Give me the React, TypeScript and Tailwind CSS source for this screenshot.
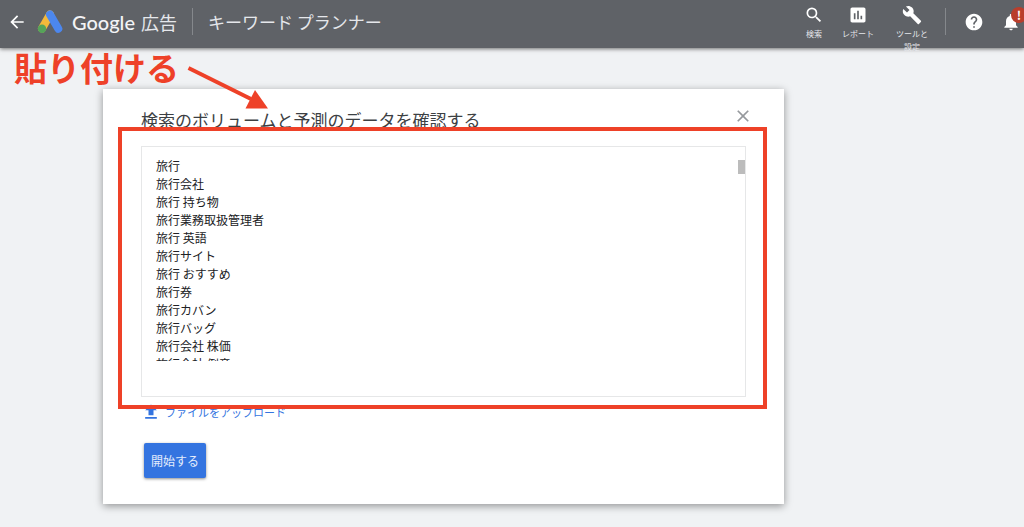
import { ReactNode } from 'react';
import { MdArrowBack, MdAssessment, MdBuild, MdClose, MdFileUpload, MdHelp, MdNotifications, MdSearch } from 'react-icons/md';

const keywords = [
    '旅行',
    '旅行会社',
    '旅行 持ち物',
    '旅行業務取扱管理者',
    '旅行 英語',
    '旅行サイト',
    '旅行 おすすめ',
    '旅行券',
    '旅行カバン',
    '旅行バッグ',
    '旅行会社 株価',
    '旅行会社 倒産',
];

interface ToolButtonProps {
    icon: ReactNode;
    label: ReactNode;
    className: string;
}

function ToolButton({ icon, label, className }: ToolButtonProps) {
    return (
        <button type="button" className={`flex flex-col items-center ${className}`}>
            {icon}
            <span className="mt-[2px] text-[8px] leading-[13px] text-gray-200">{label}</span>
        </button>
    );
}

function AdsLogo() {
    return (
        <svg width="26" height="24" viewBox="0 0 26 24" className="ml-[10px] shrink-0" aria-hidden="true">
            <path d="M13 4.5 5 18.5" stroke="#f3b93b" strokeWidth="8" strokeLinecap="round" />
            <path d="M13 4.5l8.3 14.2" stroke="#4c87ee" strokeWidth="8" strokeLinecap="round" />
            <circle cx="5" cy="18.7" r="4.2" fill="#54a45a" />
        </svg>
    );
}

function Header() {
    return (
        <header className="relative flex h-12 items-start bg-[#5f6267] text-white shadow-[0_1px_4px_rgba(0,0,0,0.55)]">
            <div className="flex h-[43px] items-center pl-[7px]">
                <button type="button" aria-label="戻る">
                    <MdArrowBack size={20} />
                </button>
                <AdsLogo />
                <span className="ml-[9px] flex items-center whitespace-nowrap">
                    <span className="font-['Lato','Noto_Sans_CJK_JP',sans-serif] text-[20px] leading-6 font-medium text-gray-100">Google</span>
                    <span className="ml-[6px] text-[18px] leading-6 text-gray-200">広告</span>
                </span>
                <span className="mx-[15px] h-[27px] w-px bg-[#85888c]" />
                <h1 className="text-[17px] leading-6 whitespace-nowrap text-gray-200">キーワード プランナー</h1>
            </div>
            <div className="ml-auto flex shrink-0 items-start pr-[3px]">
                <ToolButton className="mt-[5px] w-9" icon={<MdSearch size={20} />} label="検索" />
                <ToolButton className="mt-[5px] w-[52px]" icon={<MdAssessment size={20} />} label="レポート" />
                <ToolButton
                    className="mt-[5px] w-14"
                    icon={<MdBuild size={20} />}
                    label={
                        <>
                            ツールと
                            <br />
                            設定
                        </>
                    }
                />
                <div className="flex h-[43px] items-center">
                    <span className="mr-[18px] ml-[5px] h-[27px] w-px bg-[#85888c]" />
                    <button type="button" aria-label="ヘルプ">
                        <MdHelp size={20} />
                    </button>
                    <button type="button" aria-label="通知" className="relative ml-[17px]">
                        <MdNotifications size={20} />
                        <span className="absolute -top-[5px] left-[10px] flex size-4 items-center justify-center rounded-full bg-[#b93e2c] text-[12px] leading-4 font-bold">
                            !
                        </span>
                    </button>
                </div>
            </div>
        </header>
    );
}

export default function App() {
    return (
        <div
            lang="ja"
            className="relative min-h-screen overflow-hidden bg-[#f0f2f4] font-['Noto_Sans_CJK_JP',sans-serif] text-[#3c4043]"
        >
            <Header />

            <main className="mt-[41px] mr-[240px] mb-[23px] ml-[103px] bg-white pt-[19px] pr-[31px] pb-[26px] pl-[38px] shadow-[0_2px_8px_rgba(0,0,0,0.4)]">
                <div className="flex items-start justify-between">
                    <h2 className="text-[17px] leading-6 text-[#3c4043]">
                        <label htmlFor="keywords">検索のボリュームと予測のデータを確認する</label>
                    </h2>
                    <button type="button" aria-label="閉じる" className="-mt-0.5 text-[#96999d]">
                        <MdClose size={20} />
                    </button>
                </div>

                <div className="relative mt-[14px] mr-[7px] border border-[#e6e7e8] pt-[10px] pb-[35px] pl-[14px]">
                    <textarea
                        id="keywords"
                        className="block h-[204px] w-full resize-none overflow-hidden bg-transparent text-[12px] leading-[18px] text-[#202124] outline-none"
                        defaultValue={keywords.join('\n')}
                    />
                    <span className="absolute top-[13px] right-0 h-[14px] w-[7px] bg-[#bcbcbc]" />
                    {/* highlight frame */}
                    <div className="pointer-events-none absolute -top-5 -right-[22px] -bottom-[13px] -left-6 z-10 border-4 border-[#ee4128]" />
                </div>

                <div className="flex flex-col items-start px-[3px]">
                    <a href="#upload" className="mt-[5px] flex items-center text-[11px] leading-4 text-[#3474e0]">
                        <MdFileUpload size={20} className="mr-1 -ml-[3px]" />
                        ファイルをアップロード
                    </a>
                    <button
                        type="button"
                        className="mt-[21px] h-[35px] rounded-xs bg-[#3474e0] px-[7px] text-[12px] leading-4 text-[#e4edfc] shadow-[0_1px_3px_rgba(0,0,0,0.45)]"
                    >
                        開始する
                    </button>
                </div>
            </main>

            {/* callout and its arrow */}
            <p className="absolute top-[47px] left-[14px] text-[33px] leading-10 font-bold whitespace-nowrap text-[#ee4128]">貼り付ける</p>
            <svg width="84" height="46" viewBox="0 0 84 46" className="absolute top-[64px] left-[186px]" aria-hidden="true">
                <path d="M2.5 4 65 35" stroke="#ee4128" strokeWidth="4" />
                <path d="M82 44.5 69 26 59.5 44.5z" fill="#ee4128" />
            </svg>
        </div>
    );
}
